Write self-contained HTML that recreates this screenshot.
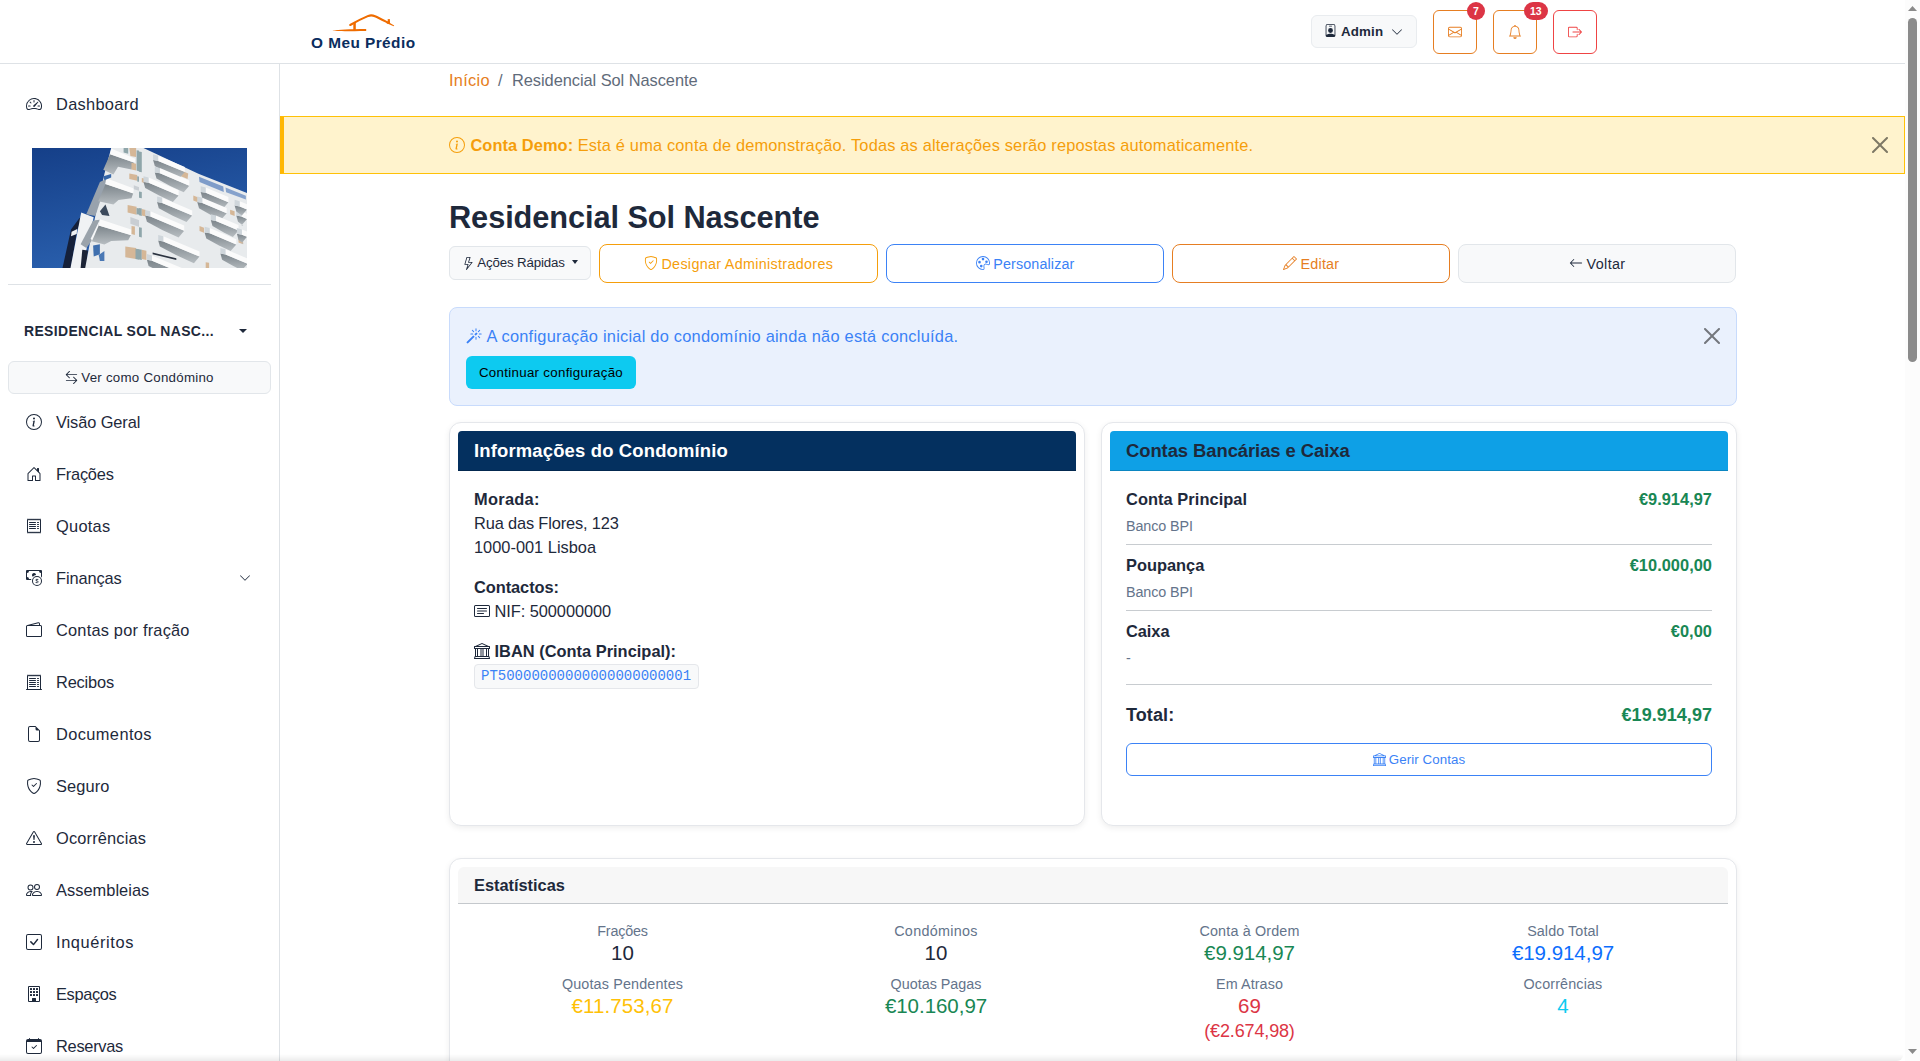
<!DOCTYPE html>
<html lang="pt"><head>
<meta charset="utf-8">
<title>Residencial Sol Nascente - O Meu Prédio</title>
<style>
*{box-sizing:border-box;margin:0;padding:0}
html,body{width:1920px;height:1061px;overflow:hidden;background:#fff}
body{font-family:"Liberation Sans",sans-serif;font-size:16px;color:#1e293b;position:relative;line-height:24px}
svg{display:inline-block;fill:currentColor;vertical-align:-.125em;width:1em;height:1em}
.t{white-space:nowrap;display:inline-block}
b,strong{font-weight:700}
.a{position:absolute;white-space:nowrap}
/* top bar */
#top{position:absolute;left:0;top:0;width:1905px;height:64px;background:#fff;border-bottom:1px solid #dee2e6;z-index:5}
#logo{position:absolute;left:311px;top:12px;width:105px;height:40px}
#logotxt{position:absolute;left:311px;top:34px;font-weight:700;font-size:15px;color:#0a2d5e;line-height:18px;white-space:nowrap}
.tbtn{position:absolute;top:10px;width:44px;height:44px;border:1px solid #e67e22;border-radius:6px;background:#fff;color:#e67e22}
.tbtn svg{position:absolute;left:14px;top:14px;width:14px;height:14px}
.badge{position:absolute;top:-9px;height:18px;min-width:18px;border-radius:9px;background:#dc3545;color:#fff;font-size:10.5px;font-weight:700;line-height:18px;text-align:center;padding:0 6px}
#admin{position:absolute;left:1311px;top:15px;width:106px;height:33px;border:1px solid #e9ecef;border-radius:6px;background:#f8f9fa;color:#1e293b;font-size:13px;font-weight:700;line-height:31px}
/* sidebar */
#side{position:absolute;left:0;top:64px;width:280px;height:997px;background:#fff;border-right:1px solid #dee2e6}
.nav{position:absolute;left:0;width:279px;height:24px;line-height:24px;font-size:16px;color:#1e293b}
.nav svg{position:absolute;left:26px;top:4px;width:16px;height:16px}
.nav .t{position:absolute;left:56px;top:0}
#bimg{position:absolute;left:32px;top:84px;width:215px;height:120px}
#shr{position:absolute;left:8px;top:220px;width:263px;height:1px;background:#dee2e6}
#cname{position:absolute;left:24px;top:256px;height:22px;line-height:22px;font-size:13.6px;font-weight:700;letter-spacing:.87px;color:#1e293b}
#cname .caret{position:absolute;left:215px;top:9px;width:0;height:0;border-left:4px solid transparent;border-right:4px solid transparent;border-top:4px solid #1e293b}
#vercomo{position:absolute;left:8px;top:297px;width:263px;height:33px;border:1px solid #e2e6ea;border-radius:6px;background:#f8f9fa;text-align:center;font-size:13px;line-height:31px;color:#1e293b}
/* main */
.card{position:absolute;background:#fff;border:1px solid #e5e7eb;border-radius:12px;box-shadow:0 2px 6px rgba(0,0,0,.07)}
.btn{position:absolute;border:1px solid;border-radius:8px;text-align:center;font-size:14px;height:39px;line-height:38px;top:244px;width:278.2px;background:#fff;white-space:nowrap}
.btn svg{width:14px;height:14px;margin-right:3.7px;vertical-align:-1px}
.ch{position:absolute;left:8px;top:8px;height:40px;border-radius:4px 4px 0 0;border-bottom:1px solid rgba(0,0,0,.16);font-weight:700;font-size:18px;line-height:39.5px;padding-left:16px}
.muted{color:#64748b}
.hr{position:absolute;height:1px;background:#c8ccd0}
.sl{position:absolute;font-size:14px;line-height:20px;color:#64748b;text-align:center;width:300px;margin-left:-150px;white-space:nowrap}
.sv{position:absolute;font-size:20px;line-height:28px;text-align:center;width:300px;margin-left:-150px;white-space:nowrap}
.g{color:#198754}
/* scrollbar */
#sb{position:absolute;left:1905px;top:0;width:15px;height:1061px;background:#fcfcfc;z-index:10}
#sb i{position:absolute;left:3px;width:9px;background:#8b8b8b;border-radius:4.5px;top:18px;height:344px}
#sb .up,#sb .dn{position:absolute;left:3px;width:9px;height:5px;background:#8a8a8a}
#sb .up{top:6px;clip-path:polygon(50% 0,100% 100%,0 100%)}
#sb .dn{top:1049px;clip-path:polygon(0 0,100% 0,50% 100%)}
#botshadow{position:absolute;left:0;top:1054px;width:1903px;height:7px;border-radius:0 0 6px 0;background:linear-gradient(to bottom,rgba(0,0,0,0),rgba(0,0,0,.03) 45%,rgba(0,0,0,.08));z-index:9}
.t{font-size:1.025em}

</style>
</head>
<body>
<div id="top">
<svg id="logo" viewBox="0 0 105 40" style="fill:none">
<path d="M39.2 13 C44 10.2 50 7 57.3 3.9 C59.6 3.1 62 3.4 64 4.3 C68 6 72.5 8.4 77 10.7" stroke="#ef6c00" stroke-width="2.1" stroke-linecap="round" fill="none"></path>
<path d="M76 9.2 L83.2 13.4 L82.7 14.2 L75.6 11.3Z" fill="#ef6c00" stroke="none"></path>
<path d="M76.6 7.3 L78.8 7.0 L79.1 11.6 L76.9 10.6Z" fill="#ef6c00" stroke="none"></path>
<path d="M42.3 11.6 L44.8 10.6 L44.8 18 L42.3 18Z" fill="#ef6c00" stroke="none"></path>
<path d="M21.8 18.6 C28 17.5 38 17.1 55.2 17 L55.2 19.1 C40 19.3 28 19.1 21.8 18.7Z" fill="#ef6c00" stroke="none"></path>
</svg>
<div id="logotxt"><span class="t" style="letter-spacing: 0.458px;">O Meu Prédio</span></div>
<div id="admin"><svg viewBox="0 0 16 16" style="position:absolute;left:12px;top:8px;width:13px;height:13px"><path d="M6.500 2a.5.5 0 0 0 0 1h3a.5.5 0 0 0 0-1h-3zM11 8a3 3 0 1 1-6 0 3 3 0 0 1 6 0z"></path><path d="M4.500 0A2.500 2.500 0 0 0 2 2.500V14a2 2 0 0 0 2 2h8a2 2 0 0 0 2-2V2.500A2.500 2.500 0 0 0 11.500 0h-7zM3 2.500A1.500 1.500 0 0 1 4.500 1h7A1.500 1.500 0 0 1 13 2.500v10.795a4.200 4.200 0 0 0-.776-.492C11.392 12.387 10.063 12 8 12s-3.392.387-4.224.803a4.200 4.200 0 0 0-.776.492V2.500z"></path></svg><span class="t" style="position: absolute; left: 29px; top: 0px; letter-spacing: 0.163px;">Admin</span><svg viewBox="0 0 16 16" style="position:absolute;left:79px;top:10px;width:12px;height:12px"><path fill-rule="evenodd" d="M1.646 4.646a.5.5 0 0 1 .708 0L8 10.293l5.646-5.647a.5.5 0 0 1 .708.708l-6 6a.5.5 0 0 1-.708 0l-6-6a.5.5 0 0 1 0-.708z"></path></svg></div>
<div class="tbtn" style="left:1433px"><svg viewBox="0 0 16 16"><path d="M0 4a2 2 0 0 1 2-2h12a2 2 0 0 1 2 2v8a2 2 0 0 1-2 2H2a2 2 0 0 1-2-2V4Zm2-1a1 1 0 0 0-1 1v.217l7 4.200 7-4.200V4a1 1 0 0 0-1-1H2Zm13 2.383-4.708 2.825L15 11.105V5.383Zm-.034 6.876-5.640-3.471L8 9.583l-1.326-.795-5.640 3.470A1 1 0 0 0 2 13h12a1 1 0 0 0 .966-.741ZM1 11.105l4.708-2.897L1 5.383v5.722Z"></path></svg><span class="badge" style="left:33px">7</span></div>
<div class="tbtn" style="left:1493px"><svg viewBox="0 0 16 16"><path d="M8 16a2 2 0 0 0 2-2H6a2 2 0 0 0 2 2zM8 1.918l-.797.161A4.002 4.002 0 0 0 4 6c0 .628-.134 2.197-.459 3.742-.160.767-.376 1.566-.663 2.258h10.244c-.287-.692-.502-1.490-.663-2.258C12.134 8.197 12 6.628 12 6a4.002 4.002 0 0 0-3.203-3.920L8 1.917zM14.220 12c.223.447.481.801.780 1H1c.299-.199.557-.553.780-1C2.680 10.200 3 6.880 3 6c0-2.420 1.720-4.440 4.005-4.901a1 1 0 1 1 1.990 0A5.002 5.002 0 0 1 13 6c0 .880.320 4.200 1.220 6z"></path></svg><span class="badge" style="left:30px">13</span></div>
<div class="tbtn" style="left:1553px;border-color:#ef4444;color:#ef4444"><svg viewBox="0 0 16 16"><path fill-rule="evenodd" d="M10 12.500a.5.5 0 0 1-.5.5h-8a.5.5 0 0 1-.5-.5v-9a.5.5 0 0 1 .5-.5h8a.5.5 0 0 1 .5.5v2a.5.5 0 0 0 1 0v-2A1.500 1.500 0 0 0 9.500 2h-8A1.500 1.500 0 0 0 0 3.500v9A1.500 1.500 0 0 0 1.500 14h8a1.500 1.500 0 0 0 1.500-1.500v-2a.5.5 0 0 0-1 0v2z"></path><path fill-rule="evenodd" d="M15.854 8.354a.5.5 0 0 0 0-.708l-3-3a.5.5 0 0 0-.708.708L14.293 7.500H5.500a.5.5 0 0 0 0 1h8.793l-2.147 2.146a.5.5 0 0 0 .708.708l3-3z"></path></svg></div>
</div>
<div id="side">
<div class="nav" style="top:28px"><svg viewBox="0 0 16 16"><path d="M8 4a.5.5 0 0 1 .5.5V6a.5.5 0 0 1-1 0V4.500A.5.5 0 0 1 8 4zM3.732 5.732a.5.5 0 0 1 .707 0l.915.914a.5.5 0 1 1-.708.708l-.914-.915a.5.5 0 0 1 0-.707zM2 10a.5.5 0 0 1 .5-.5h1.586a.5.5 0 0 1 0 1H2.500A.5.5 0 0 1 2 10zm9.500 0a.5.5 0 0 1 .5-.5h1.500a.5.5 0 0 1 0 1H12a.5.5 0 0 1-.5-.5zm.754-4.246a.389.389 0 0 0-.527-.020L7.547 9.310a.910.910 0 1 0 1.302 1.258l3.434-4.297a.389.389 0 0 0-.029-.518z"></path><path fill-rule="evenodd" d="M0 10a8 8 0 1 1 15.547 2.661c-.442 1.253-1.845 1.602-2.932 1.250C11.309 13.488 9.475 13 8 13c-1.474 0-3.310.488-4.615.911-1.087.352-2.490.003-2.932-1.250A7.988 7.988 0 0 1 0 10zm8-7a7 7 0 0 0-6.603 9.329c.203.575.923.876 1.680.630C4.397 12.533 6.358 12 8 12s3.604.532 4.923.960c.757.245 1.477-.056 1.680-.631A7 7 0 0 0 8 3z"></path></svg><span class="t" style="letter-spacing: 0.295px;">Dashboard</span></div>
<svg id="bimg" viewBox="0 0 215 120" preserveAspectRatio="none"><defs><linearGradient id="sky" x1="0" y1="0" x2=".35" y2="1"><stop offset="0" stop-color="#153f88"></stop><stop offset="1" stop-color="#2a60ae"></stop></linearGradient><linearGradient id="ug" x1="0" y1="0" x2="0" y2="1"><stop offset="0" stop-color="#7b848a"></stop><stop offset="1" stop-color="#b7bdc1"></stop></linearGradient></defs><rect width="215" height="120" fill="url(#sky)"></rect><polygon points="30.5,120.0 39.0,81.4 47.5,70.1 49.8,72.4 45.2,81.4 39.0,120.0" fill="#15203a"></polygon><polygon points="38.5,120.0 49.2,64.5 61.7,69.2 50.3,120.0" fill="#f0f2f4"></polygon><polygon points="39.6,83.7 45.2,80.9 44.7,86.0 39.0,88.2" fill="#eef0f2"></polygon><polygon points="48.6,120.0 50.3,101.8 56.0,102.4 54.3,120.0" fill="#1c2436"></polygon><polygon points="79.2,0.0 108.0,0.0 108.0,120.0 53.2,120.0 56.6,101.8 63.3,67.9 72.4,26.0" fill="#e8ebed"></polygon><polygon points="54.3,66.2 67.9,33.9 74.1,31.1 73.5,37.3 63.3,67.9" fill="#98a2ad"></polygon><polygon points="48.6,96.2 61.1,72.4 67.9,71.8 66.7,79.2 58.8,93.9 54.3,100.1" fill="#9aa3ab"></polygon><polygon points="67.9,63.3 73.5,56.6 77.5,67.9 70.1,67.0" fill="#3c4a5c"></polygon><polygon points="78.1,6.2 102.4,14.7 99.5,21.5 86.0,18.7 81.4,26.6 71.3,21.7" fill="url(#ug)"></polygon><polygon points="73.5,36.0 101.2,45.2 99.5,50.3 86.5,52.0 81.4,56.6 66.2,53.2" fill="url(#ug)"></polygon><polygon points="66.7,77.5 99.0,87.1 96.2,92.2 79.2,93.0 72.4,96.4 58.8,93.0" fill="url(#ug)"></polygon><polygon points="79.2,0.6 103.2,10.7 102.7,14.7 78.1,6.2" fill="#fbfbfb"></polygon><polygon points="74.4,30.3 101.8,40.5 101.2,45.5 73.3,36.0" fill="#fbfbfb"></polygon><polygon points="67.9,71.3 99.8,81.7 99.1,87.3 66.5,77.6" fill="#fbfbfb"></polygon><polygon points="58.8,90.5 67.9,71.5 66.5,78.1 60.0,93.0" fill="#f6f7f8"></polygon><polygon points="61.1,97.5 67.9,96.2 67.9,106.3 61.7,108.6" fill="#3f6fae"></polygon><polygon points="66.7,106.9 72.4,102.9 72.4,113.1 67.9,113.1" fill="#4a78b4"></polygon><polygon points="71.3,28.3 79.2,26.0 79.2,29.6 72.4,32.2" fill="#3566a8"></polygon><polygon points="97.3,0.0 104.1,0.0 104.1,9.0 98.4,7.9" fill="#d5b797"></polygon><polygon points="99.5,14.7 104.1,15.8 104.1,22.6 99.5,21.5" fill="#d5b797"></polygon><polygon points="97.3,25.5 105.2,27.1 105.2,32.8 97.3,31.1" fill="#d5b797"></polygon><polygon points="95.6,57.1 104.6,58.8 104.6,66.7 95.6,64.5" fill="#d5b797"></polygon><polygon points="99.5,78.1 102.9,78.6 102.9,87.1 99.5,86.0" fill="#d5b797"></polygon><polygon points="93.3,98.4 104.1,100.1 104.1,110.9 93.3,109.2" fill="#d5b797"></polygon><polygon points="91.6,0.0 96.2,0.0 96.2,5.7 91.6,4.5" fill="#8fa6aa"></polygon><polygon points="104.6,2.3 108.0,2.8 108.0,23.8 104.6,22.6" fill="#8fa6aa"></polygon><polygon points="105.2,28.3 108.0,28.8 108.0,33.9 105.2,33.4" fill="#8fa6aa"></polygon><polygon points="104.6,60.0 108.0,60.5 108.0,66.7 104.6,66.2" fill="#8fa6aa"></polygon><polygon points="103.5,100.7 108.0,101.2 108.0,112.0 103.5,110.9" fill="#8fa6aa"></polygon><polygon points="98.4,69.0 108.0,72.4 108.0,79.2 98.4,75.8" fill="#c9ced3"></polygon><polygon points="101.8,37.3 108.0,39.6 108.0,43.0 101.8,41.3" fill="#c9ced3"></polygon><polygon points="107.0,0.0 111.5,0.0 166.4,25.8 215.0,45.0 215.0,120.0 107.0,120.0" fill="#e8ebed"></polygon><polygon points="167.0,28.8 191.3,38.5 191.8,43.9 167.5,33.9" fill="#7e9cc9"></polygon><polygon points="193.5,39.6 213.9,47.7 213.9,51.5 194.1,44.3" fill="#86a2cc"></polygon><polygon points="107.0,3.4 109.8,4.0 109.8,24.3 107.0,23.8" fill="#8fa6aa"></polygon><polygon points="107.0,43.6 109.8,44.1 109.8,50.3 107.0,49.8" fill="#8fa6aa"></polygon><polygon points="107.0,60.0 109.8,60.5 109.8,67.9 107.0,67.3" fill="#8fa6aa"></polygon><polygon points="107.0,79.2 109.8,79.8 109.8,89.4 107.0,88.8" fill="#8fa6aa"></polygon><polygon points="107.0,101.2 109.8,101.8 109.8,112.0 107.0,111.4" fill="#8fa6aa"></polygon><polygon points="109.8,30.0 113.8,30.8 113.8,35.1 109.8,34.3" fill="#d5b797"></polygon><polygon points="109.8,61.1 113.8,62.0 113.8,68.4 109.8,67.5" fill="#d5b797"></polygon><polygon points="109.8,101.8 114.4,102.7 114.4,112.0 109.8,111.1" fill="#d5b797"></polygon><polygon points="148.3,22.1 156.2,25.5 155.6,31.1 147.7,27.7" fill="#d5b797"></polygon><polygon points="161.3,47.5 165.8,49.2 165.8,54.3 161.3,52.6" fill="#d5b797"></polygon><polygon points="167.5,78.1 172.0,79.8 172.0,84.8 167.5,83.1" fill="#d5b797"></polygon><polygon points="198.1,61.7 202.6,63.3 202.6,67.9 198.1,66.2" fill="#d5b797"></polygon><polygon points="206.5,88.8 211.1,90.5 211.1,96.2 206.5,94.5" fill="#d5b797"></polygon><polygon points="173.7,114.3 177.1,114.8 177.1,120.0 173.7,120.0" fill="#d5b797"></polygon><polygon points="121.1,12.0 126.2,12.9 152.8,24.1 147.2,30.6 135.5,25.2 122.8,18.1" fill="url(#ug)"></polygon><polygon points="126.2,7.7 152.8,18.9 152.8,24.1 126.2,12.9" fill="#fbfbfb"></polygon><polygon points="121.1,6.3 126.2,7.7 126.2,12.9 121.1,12.0" fill="#cfd6db"></polygon><polygon points="122.8,24.4 127.9,25.3 157.3,37.7 151.7,44.3 138.2,38.0 124.5,30.5" fill="url(#ug)"></polygon><polygon points="127.9,20.1 157.3,32.5 157.3,37.7 127.9,25.3" fill="#fbfbfb"></polygon><polygon points="122.8,18.8 127.9,20.1 127.9,25.3 122.8,24.4" fill="#cfd6db"></polygon><polygon points="111.5,33.9 116.6,34.8 146.6,47.4 140.9,54.0 127.1,47.6 113.2,40.0" fill="url(#ug)"></polygon><polygon points="116.6,29.6 146.6,42.2 146.6,47.4 116.6,34.8" fill="#fbfbfb"></polygon><polygon points="111.5,28.3 116.6,29.6 116.6,34.8 111.5,33.9" fill="#cfd6db"></polygon><polygon points="125.1,54.1 130.2,55.0 160.2,67.6 154.5,74.1 140.7,67.8 126.8,60.2" fill="url(#ug)"></polygon><polygon points="130.2,49.8 160.2,62.4 160.2,67.6 130.2,55.0" fill="#fbfbfb"></polygon><polygon points="125.1,48.4 130.2,49.8 130.2,55.0 125.1,54.1" fill="#cfd6db"></polygon><polygon points="113.2,67.6 118.3,68.6 152.2,82.8 146.6,89.4 130.2,81.9 114.9,73.8" fill="url(#ug)"></polygon><polygon points="118.3,63.3 152.2,77.6 152.2,82.8 118.3,68.6" fill="#fbfbfb"></polygon><polygon points="113.2,62.0 118.3,63.3 118.3,68.6 113.2,67.6" fill="#cfd6db"></polygon><polygon points="126.2,92.5 131.3,93.4 167.5,108.6 161.9,115.2 144.0,107.1 127.9,98.6" fill="url(#ug)"></polygon><polygon points="131.3,88.2 167.5,103.4 167.5,108.6 131.3,93.4" fill="#fbfbfb"></polygon><polygon points="126.2,86.9 131.3,88.2 131.3,93.4 126.2,92.5" fill="#cfd6db"></polygon><polygon points="114.9,111.8 120.0,112.7 159.6,129.3 153.9,135.9 133.9,126.9 116.6,117.9" fill="url(#ug)"></polygon><polygon points="120.0,107.5 159.6,124.1 159.6,129.3 120.0,112.7" fill="#fbfbfb"></polygon><polygon points="114.9,106.1 120.0,107.5 120.0,112.7 114.9,111.8" fill="#cfd6db"></polygon><polygon points="168.7,43.9 173.7,44.8 196.4,54.3 190.7,60.9 181.7,56.5 170.3,50.0" fill="url(#ug)"></polygon><polygon points="173.7,39.6 196.4,49.1 196.4,54.3 173.7,44.8" fill="#fbfbfb"></polygon><polygon points="168.7,38.2 173.7,39.6 173.7,44.8 168.7,43.9" fill="#cfd6db"></polygon><polygon points="165.3,54.1 170.3,55.0 194.7,65.2 189.0,71.8 178.9,66.9 167.0,60.2" fill="url(#ug)"></polygon><polygon points="170.3,49.8 194.7,60.0 194.7,65.2 170.3,55.0" fill="#fbfbfb"></polygon><polygon points="165.3,48.4 170.3,49.8 170.3,55.0 165.3,54.1" fill="#cfd6db"></polygon><polygon points="178.8,71.9 183.9,72.9 206.5,82.4 200.9,88.9 191.8,84.5 180.5,78.1" fill="url(#ug)"></polygon><polygon points="183.9,67.6 206.5,77.1 206.5,82.4 183.9,72.9" fill="#fbfbfb"></polygon><polygon points="178.8,66.3 183.9,67.6 183.9,72.9 178.8,71.9" fill="#cfd6db"></polygon><polygon points="172.6,84.4 177.7,85.3 204.3,96.5 198.6,103.0 187.0,97.6 174.3,90.5" fill="url(#ug)"></polygon><polygon points="177.7,80.1 204.3,91.3 204.3,96.5 177.7,85.3" fill="#fbfbfb"></polygon><polygon points="172.6,78.7 177.7,80.1 177.7,85.3 172.6,84.4" fill="#cfd6db"></polygon><polygon points="188.4,105.5 193.5,106.4 215.6,115.7 209.9,122.3 201.3,118.1 190.1,111.7" fill="url(#ug)"></polygon><polygon points="193.5,101.2 215.6,110.5 215.6,115.7 193.5,106.4" fill="#fbfbfb"></polygon><polygon points="188.4,99.9 193.5,101.2 193.5,106.4 188.4,105.5" fill="#cfd6db"></polygon><polygon points="204.3,67.6 209.4,68.6 215.0,70.9 209.4,77.5 211.4,77.8 206.0,73.8" fill="url(#ug)"></polygon><polygon points="209.4,63.3 215.0,65.7 215.0,70.9 209.4,68.6" fill="#fbfbfb"></polygon><polygon points="204.3,62.0 209.4,63.3 209.4,68.6 204.3,67.6" fill="#cfd6db"></polygon><polygon points="202.6,57.5 207.7,58.4 215.0,61.5 209.4,68.0 210.3,67.8 204.3,63.6" fill="url(#ug)"></polygon><polygon points="207.7,53.2 215.0,56.3 215.0,61.5 207.7,58.4" fill="#fbfbfb"></polygon><polygon points="202.6,51.8 207.7,53.2 207.7,58.4 202.6,57.5" fill="#cfd6db"></polygon><polygon points="204.9,85.7 209.9,86.7 215.0,88.8 209.4,95.4 211.7,95.8 206.5,91.9" fill="url(#ug)"></polygon><polygon points="209.9,81.4 215.0,83.6 215.0,88.8 209.9,86.7" fill="#fbfbfb"></polygon><polygon points="204.9,80.1 209.9,81.4 209.9,86.7 204.9,85.7" fill="#cfd6db"></polygon><polygon points="120.6,104.6 144.3,110.3 144.3,112.0 120.6,106.3" fill="#2b3340"></polygon></svg>
<div id="shr"></div>
<div id="cname"><span class="t" style="letter-spacing: 0.37px;">RESIDENCIAL SOL NASC...</span><i class="caret"></i></div>
<div id="vercomo"><svg viewBox="0 0 16 16" style="width:13px;height:13px;margin-right:3px"><path fill-rule="evenodd" d="M1 11.500a.5.5 0 0 0 .5.5h11.793l-3.147 3.146a.5.5 0 0 0 .708.708l4-4a.5.5 0 0 0 0-.708l-4-4a.5.5 0 0 0-.708.708L13.293 11H1.500a.5.5 0 0 0-.5.5zm14-7a.5.5 0 0 1-.5.5H2.707l3.147 3.146a.5.5 0 1 1-.708.708l-4-4a.5.5 0 0 1 0-.708l4-4a.5.5 0 1 1 .708.708L2.707 4H14.500a.5.5 0 0 1 .5.5z"></path></svg><span class="t" style="letter-spacing: 0.25px;">Ver como Condómino</span></div>
<div class="nav" style="top:346px"><svg viewBox="0 0 16 16"><path d="M8 15A7 7 0 1 1 8 1a7 7 0 0 1 0 14zm0 1A8 8 0 1 0 8 0a8 8 0 0 0 0 16z"></path><path d="m8.930 6.588-2.290.287-.082.380.450.083c.294.070.352.176.288.469l-.738 3.468c-.194.897.105 1.319.808 1.319.545 0 1.178-.252 1.465-.598l.088-.416c-.200.176-.492.246-.686.246-.275 0-.375-.193-.304-.533L8.930 6.588zM9 4.500a1 1 0 1 1-2 0 1 1 0 0 1 2 0z"></path></svg><span class="t" style="letter-spacing: -0.097px;">Visão Geral</span></div>
<div class="nav" style="top:398px"><svg viewBox="0 0 16 16"><path d="M8.354 1.146a.5.5 0 0 0-.708 0l-6 6A.5.5 0 0 0 1.500 7.500v7a.5.5 0 0 0 .5.5h4.500a.5.5 0 0 0 .5-.5v-4h2v4a.5.5 0 0 0 .5.5H14a.5.5 0 0 0 .5-.5v-7a.5.5 0 0 0-.146-.354L13 5.793V2.500a.5.5 0 0 0-.5-.5h-1a.5.5 0 0 0-.5.5v1.293L8.354 1.146zM2.500 14V7.707l5.500-5.500 5.500 5.500V14H10v-4a.5.5 0 0 0-.5-.5h-3a.5.5 0 0 0-.5.5v4H2.500z"></path></svg><span class="t" style="letter-spacing: -0.228px;">Frações</span></div>
<div class="nav" style="top:450px"><svg viewBox="0 0 16 16"><path d="M1.920.506a.5.5 0 0 1 .434.140L3 1.293l.646-.647a.5.5 0 0 1 .708 0L5 1.293l.646-.647a.5.5 0 0 1 .708 0L7 1.293l.646-.647a.5.5 0 0 1 .708 0L9 1.293l.646-.647a.5.5 0 0 1 .708 0l.646.647.646-.647a.5.5 0 0 1 .708 0l.646.647.646-.647a.5.5 0 0 1 .801.130l.5 1A.5.5 0 0 1 15 2v12a.5.5 0 0 1-.053.224l-.5 1a.5.5 0 0 1-.800.130L13 14.707l-.646.647a.5.5 0 0 1-.708 0L11 14.707l-.646.647a.5.5 0 0 1-.708 0L9 14.707l-.646.647a.5.5 0 0 1-.708 0L7 14.707l-.646.647a.5.5 0 0 1-.708 0L5 14.707l-.646.647a.5.5 0 0 1-.708 0L3 14.707l-.646.647a.5.5 0 0 1-.801-.130l-.5-1A.5.5 0 0 1 1 14V2a.5.5 0 0 1 .053-.224l.5-1a.5.5 0 0 1 .367-.270zm.217 1.338L2 2.118v11.764l.137.274.510-.510a.5.5 0 0 1 .707 0l.646.647.646-.646a.5.5 0 0 1 .708 0l.646.646.646-.646a.5.5 0 0 1 .708 0l.646.646.646-.646a.5.5 0 0 1 .708 0l.646.646.646-.646a.5.5 0 0 1 .708 0l.646.646.646-.646a.5.5 0 0 1 .708 0l.509.509.137-.274V2.118l-.137-.274-.510.510a.5.5 0 0 1-.707 0L12 1.707l-.646.647a.5.5 0 0 1-.708 0L10 1.707l-.646.647a.5.5 0 0 1-.708 0L8 1.707l-.646.647a.5.5 0 0 1-.708 0L6 1.707l-.646.647a.5.5 0 0 1-.708 0L4 1.707l-.646.647a.5.5 0 0 1-.708 0l-.509-.510z"></path><path d="M3 4.500a.5.5 0 0 1 .5-.5h6a.5.5 0 1 1 0 1h-6a.5.5 0 0 1-.5-.5zm0 2a.5.5 0 0 1 .5-.5h6a.5.5 0 1 1 0 1h-6a.5.5 0 0 1-.5-.5zm0 2a.5.5 0 0 1 .5-.5h6a.5.5 0 1 1 0 1h-6a.5.5 0 0 1-.5-.5zm0 2a.5.5 0 0 1 .5-.5h6a.5.5 0 0 1 0 1h-6a.5.5 0 0 1-.5-.5zm8-6a.5.5 0 0 1 .5-.5h1a.5.5 0 0 1 0 1h-1a.5.5 0 0 1-.5-.5zm0 2a.5.5 0 0 1 .5-.5h1a.5.5 0 0 1 0 1h-1a.5.5 0 0 1-.5-.5zm0 2a.5.5 0 0 1 .5-.5h1a.5.5 0 0 1 0 1h-1a.5.5 0 0 1-.5-.5zm0 2a.5.5 0 0 1 .5-.5h1a.5.5 0 0 1 0 1h-1a.5.5 0 0 1-.5-.5z"></path></svg><span class="t" style="letter-spacing: 0.271px;">Quotas</span></div>
<div class="nav" style="top:502px"><svg viewBox="0 0 16 16"><path fill-rule="evenodd" d="M11 15a4 4 0 1 0 0-8 4 4 0 0 0 0 8zm5-4a5 5 0 1 1-10 0 5 5 0 0 1 10 0z"></path><path d="M9.438 11.944c.047.596.518 1.060 1.363 1.116v.440h.375v-.443c.875-.061 1.386-.529 1.386-1.207 0-.618-.390-.936-1.090-1.100l-.296-.070v-1.200c.376.043.614.248.671.532h.658c-.047-.575-.540-1.024-1.329-1.073V8.500h-.375v.450c-.747.073-1.255.522-1.255 1.158 0 .562.378.920 1.007 1.066l.248.061v1.272c-.384-.058-.639-.270-.696-.563h-.668zm1.360-1.354c-.369-.085-.569-.260-.569-.522 0-.294.216-.514.572-.578v1.100h-.003zm.432.746c.449.104.655.272.655.569 0 .339-.257.571-.709.614v-1.195l.054.012z"></path><path d="M1 0a1 1 0 0 0-1 1v8a1 1 0 0 0 1 1h4.083c.058-.344.145-.678.258-1H3a2 2 0 0 0-2-2V3a2 2 0 0 0 2-2h10a2 2 0 0 0 2 2v3.528c.380.340.717.728 1 1.154V1a1 1 0 0 0-1-1H1z"></path><path d="M9.998 5.083 10 5a2 2 0 1 0-3.132 1.650 5.982 5.982 0 0 1 3.130-1.567z"></path></svg><span class="t" style="letter-spacing: -0.125px;">Finanças</span><svg viewBox="0 0 16 16" style="left:239px;top:6px;width:12px;height:12px"><path fill-rule="evenodd" d="M1.646 4.646a.5.5 0 0 1 .708 0L8 10.293l5.646-5.647a.5.5 0 0 1 .708.708l-6 6a.5.5 0 0 1-.708 0l-6-6a.5.5 0 0 1 0-.708z"></path></svg></div>
<div class="nav" style="top:554px"><svg viewBox="0 0 16 16"><path d="M12.136.326A1.500 1.500 0 0 1 14 1.780V3h.5A1.500 1.500 0 0 1 16 4.500v9a1.500 1.500 0 0 1-1.500 1.500h-13A1.500 1.500 0 0 1 0 13.500v-9a1.500 1.500 0 0 1 1.432-1.499L12.136.326zM5.562 3H13V1.780a.5.5 0 0 0-.621-.484L5.562 3zM1.500 4a.5.5 0 0 0-.5.5v9a.5.5 0 0 0 .5.5h13a.5.5 0 0 0 .5-.5v-9a.5.5 0 0 0-.5-.5h-13z"></path></svg><span class="t" style="letter-spacing: 0.198px;">Contas por fração</span></div>
<div class="nav" style="top:606px"><svg viewBox="0 0 16 16"><path d="M3 4.500a.5.5 0 0 1 .5-.5h6a.5.5 0 1 1 0 1h-6a.5.5 0 0 1-.5-.5zm0 2a.5.5 0 0 1 .5-.5h6a.5.5 0 1 1 0 1h-6a.5.5 0 0 1-.5-.5zm0 2a.5.5 0 0 1 .5-.5h6a.5.5 0 1 1 0 1h-6a.5.5 0 0 1-.5-.5zm0 2a.5.5 0 0 1 .5-.5h6a.5.5 0 0 1 0 1h-6a.5.5 0 0 1-.5-.5zm0 2a.5.5 0 0 1 .5-.5h6a.5.5 0 0 1 0 1h-6a.5.5 0 0 1-.5-.5zM11.500 4a.5.5 0 0 0 0 1h1a.5.5 0 0 0 0-1h-1zm0 2a.5.5 0 0 0 0 1h1a.5.5 0 0 0 0-1h-1zm0 2a.5.5 0 0 0 0 1h1a.5.5 0 0 0 0-1h-1zm0 2a.5.5 0 0 0 0 1h1a.5.5 0 0 0 0-1h-1zm0 2a.5.5 0 0 0 0 1h1a.5.5 0 0 0 0-1h-1z"></path><path d="M2.354.646a.5.5 0 0 0-.801.130l-.5 1A.5.5 0 0 0 1 2v13H.5a.5.5 0 0 0 0 1h15a.5.5 0 0 0 0-1H15V2a.5.5 0 0 0-.053-.224l-.5-1a.5.5 0 0 0-.800-.130L13 1.293l-.646-.647a.5.5 0 0 0-.708 0L11 1.293l-.646-.647a.5.5 0 0 0-.708 0L9 1.293 8.354.646a.5.5 0 0 0-.708 0L7 1.293 6.354.646a.5.5 0 0 0-.708 0L5 1.293 4.354.646a.5.5 0 0 0-.708 0L3 1.293 2.354.646zm-.217 1.198.510.510a.5.5 0 0 0 .707 0L4 1.707l.646.647a.5.5 0 0 0 .708 0L6 1.707l.646.647a.5.5 0 0 0 .708 0L8 1.707l.646.647a.5.5 0 0 0 .708 0L10 1.707l.646.647a.5.5 0 0 0 .708 0L12 1.707l.646.647a.5.5 0 0 0 .708 0l.509-.510.137.274V15H2V2.118l.137-.274z"></path></svg><span class="t" style="letter-spacing: -0.179px;">Recibos</span></div>
<div class="nav" style="top:658px"><svg viewBox="0 0 16 16"><path d="M14 4.500V14a2 2 0 0 1-2 2H4a2 2 0 0 1-2-2V2a2 2 0 0 1 2-2h5.500L14 4.500zm-3 0A1.500 1.500 0 0 1 9.500 3V1H4a1 1 0 0 0-1 1v12a1 1 0 0 0 1 1h8a1 1 0 0 0 1-1V4.500h-2z"></path></svg><span class="t" style="letter-spacing: 0.391px;">Documentos</span></div>
<div class="nav" style="top:710px"><svg viewBox="0 0 16 16"><path d="M5.338 1.590a61.440 61.440 0 0 0-2.837.856.481.481 0 0 0-.328.390c-.554 4.157.726 7.190 2.253 9.188a10.725 10.725 0 0 0 2.287 2.233c.346.244.652.420.893.533.120.057.218.095.293.118a.550.550 0 0 0 .101.025.615.615 0 0 0 .100-.025c.076-.023.174-.061.294-.118.240-.113.547-.290.893-.533a10.726 10.726 0 0 0 2.287-2.233c1.527-1.997 2.807-5.031 2.253-9.188a.480.480 0 0 0-.328-.390c-.651-.213-1.750-.560-2.837-.855C9.552 1.290 8.531 1.067 8 1.067c-.530 0-1.552.223-2.662.524zM5.072.560C6.157.265 7.310 0 8 0s1.843.265 2.928.560c1.110.300 2.229.655 2.887.870a1.540 1.540 0 0 1 1.044 1.262c.596 4.477-.787 7.795-2.465 9.990a11.775 11.775 0 0 1-2.517 2.453 7.159 7.159 0 0 1-1.048.625c-.280.132-.581.240-.829.240s-.548-.108-.829-.240a7.158 7.158 0 0 1-1.048-.625 11.777 11.777 0 0 1-2.517-2.453C1.928 10.487.545 7.169 1.141 2.692A1.540 1.540 0 0 1 2.185 1.430 62.456 62.456 0 0 1 5.072.560z"></path><path d="M10.854 5.146a.5.5 0 0 1 0 .708l-3 3a.5.5 0 0 1-.708 0l-1.500-1.500a.5.5 0 1 1 .708-.708L7.500 7.793l2.646-2.647a.5.5 0 0 1 .708 0z"></path></svg><span class="t" style="letter-spacing: 0.109px;">Seguro</span></div>
<div class="nav" style="top:762px"><svg viewBox="0 0 16 16"><path d="M7.938 2.016A.130.130 0 0 1 8.002 2a.130.130 0 0 1 .063.016.146.146 0 0 1 .054.057l6.857 11.667c.036.060.035.124.002.183a.163.163 0 0 1-.054.060.116.116 0 0 1-.066.017H1.146a.115.115 0 0 1-.066-.017.163.163 0 0 1-.054-.060.176.176 0 0 1 .002-.183L7.884 2.073a.147.147 0 0 1 .054-.057zm1.044-.450a1.130 1.130 0 0 0-1.960 0L.165 13.233c-.457.778.091 1.767.980 1.767h13.713c.889 0 1.438-.990.980-1.767L8.982 1.566z"></path><path d="M7.002 12a1 1 0 1 1 2 0 1 1 0 0 1-2 0zM7.100 5.995a.905.905 0 1 1 1.800 0l-.350 3.507a.552.552 0 0 1-1.100 0L7.100 5.995z"></path></svg><span class="t" style="letter-spacing: 0.161px;">Ocorrências</span></div>
<div class="nav" style="top:814px"><svg viewBox="0 0 16 16"><path d="M15 14s1 0 1-1-1-4-5-4-5 3-5 4 1 1 1 1h8Zm-7.978-1A.261.261 0 0 1 7 12.996c.001-.264.167-1.030.760-1.720C8.312 10.629 9.282 10 11 10c1.717 0 2.687.630 3.240 1.276.593.690.758 1.457.760 1.720l-.008.002a.274.274 0 0 1-.014.002H7.022ZM11 7a2 2 0 1 0 0-4 2 2 0 0 0 0 4Zm3-2a3 3 0 1 1-6 0 3 3 0 0 1 6 0ZM6.936 9.280a5.880 5.880 0 0 0-1.230-.247A7.350 7.350 0 0 0 5 9c-4 0-5 3-5 4 0 .667.333 1 1 1h4.216A2.238 2.238 0 0 1 5 13c0-1.010.377-2.042 1.090-2.904.243-.294.526-.569.846-.816ZM4.920 10A5.493 5.493 0 0 0 4 13H1c0-.260.164-1.030.760-1.724.545-.636 1.492-1.256 3.160-1.275ZM1.500 5.500a3 3 0 1 1 6 0 3 3 0 0 1-6 0Zm3-2a2 2 0 1 0 0 4 2 2 0 0 0 0-4Z"></path></svg><span class="t" style="letter-spacing: 0.034px;">Assembleias</span></div>
<div class="nav" style="top:866px"><svg viewBox="0 0 16 16"><path d="M14 1a1 1 0 0 1 1 1v12a1 1 0 0 1-1 1H2a1 1 0 0 1-1-1V2a1 1 0 0 1 1-1h12zM2 0a2 2 0 0 0-2 2v12a2 2 0 0 0 2 2h12a2 2 0 0 0 2-2V2a2 2 0 0 0-2-2H2z"></path><path d="M10.970 4.970a.75.75 0 0 1 1.071 1.050l-3.992 4.990a.75.75 0 0 1-1.080.020L4.324 8.384a.75.75 0 1 1 1.060-1.060l2.094 2.093 3.473-4.425a.235.235 0 0 1 .020-.022z"></path></svg><span class="t" style="letter-spacing: 0.594px;">Inquéritos</span></div>
<div class="nav" style="top:918px"><svg viewBox="0 0 16 16"><path d="M4 2.500a.5.5 0 0 1 .5-.5h1a.5.5 0 0 1 .5.5v1a.5.5 0 0 1-.5.5h-1a.5.5 0 0 1-.5-.5v-1Zm3 0a.5.5 0 0 1 .5-.5h1a.5.5 0 0 1 .5.5v1a.5.5 0 0 1-.5.5h-1a.5.5 0 0 1-.5-.5v-1Zm3.500-.5a.5.5 0 0 0-.5.5v1a.5.5 0 0 0 .5.5h1a.5.5 0 0 0 .5-.5v-1a.5.5 0 0 0-.5-.5h-1ZM4 5.500a.5.5 0 0 1 .5-.5h1a.5.5 0 0 1 .5.5v1a.5.5 0 0 1-.5.5h-1a.5.5 0 0 1-.5-.5v-1ZM7.500 5a.5.5 0 0 0-.5.5v1a.5.5 0 0 0 .5.5h1a.5.5 0 0 0 .5-.5v-1a.5.5 0 0 0-.5-.5h-1Zm2.500.5a.5.5 0 0 1 .5-.5h1a.5.5 0 0 1 .5.5v1a.5.5 0 0 1-.5.5h-1a.5.5 0 0 1-.5-.5v-1ZM4.500 8a.5.5 0 0 0-.5.5v1a.5.5 0 0 0 .5.5h1a.5.5 0 0 0 .5-.5v-1a.5.5 0 0 0-.5-.5h-1Zm2.500.5a.5.5 0 0 1 .5-.5h1a.5.5 0 0 1 .5.5v1a.5.5 0 0 1-.5.5h-1a.5.5 0 0 1-.5-.5v-1Zm3.500-.5a.5.5 0 0 0-.5.5v1a.5.5 0 0 0 .5.5h1a.5.5 0 0 0 .5-.5v-1a.5.5 0 0 0-.5-.5h-1Z"></path><path d="M2 1a1 1 0 0 1 1-1h10a1 1 0 0 1 1 1v14a1 1 0 0 1-1 1H3a1 1 0 0 1-1-1V1Zm11 0H3v14h3v-2.500a.5.5 0 0 1 .5-.5h3a.5.5 0 0 1 .5.5V15h3V1Z"></path></svg><span class="t" style="letter-spacing: -0.353px;">Espaços</span></div>
<div class="nav" style="top:970px"><svg viewBox="0 0 16 16"><path d="M10.854 7.146a.5.5 0 0 1 0 .708l-3 3a.5.5 0 0 1-.708 0l-1.500-1.500a.5.5 0 1 1 .708-.708L7.500 9.793l2.646-2.647a.5.5 0 0 1 .708 0z"></path><path d="M3.500 0a.5.5 0 0 1 .5.5V1h8V.5a.5.5 0 0 1 1 0V1h1a2 2 0 0 1 2 2v11a2 2 0 0 1-2 2H2a2 2 0 0 1-2-2V3a2 2 0 0 1 2-2h1V.5a.5.5 0 0 1 .5-.5zM1 4v10a1 1 0 0 0 1 1h12a1 1 0 0 0 1-1V4H1z"></path></svg><span class="t" style="letter-spacing: -0.273px;">Reservas</span></div>
</div>
<div id="main">
<div class="a" style="left:449px;top:68px;color:#e67e22"><span class="t" style="letter-spacing: 0.292px;">Início</span></div>
<div class="a" style="left:498px;top:68px;color:#5f6b7a"><span class="t" style="letter-spacing: 1.391px;">/</span></div>
<div class="a" style="left:512px;top:68px;color:#5f6b7a"><span class="t" style="letter-spacing: -0.051px;">Residencial Sol Nascente</span></div>

<div class="a" style="left:280px;top:116px;width:1625px;height:58px;background:#fff3cd;border:1px solid #ffc107;border-left:4px solid #ffb703"></div>
<div class="a" style="left:449px;top:133px;color:#f59e0b"><svg viewBox="0 0 16 16" style="width:16px;height:16px;vertical-align:-2px"><path d="M8 15A7 7 0 1 1 8 1a7 7 0 0 1 0 14zm0 1A8 8 0 1 0 8 0a8 8 0 0 0 0 16z"></path><path d="m8.930 6.588-2.290.287-.082.380.450.083c.294.070.352.176.288.469l-.738 3.468c-.194.897.105 1.319.808 1.319.545 0 1.178-.252 1.465-.598l.088-.416c-.200.176-.492.246-.686.246-.275 0-.375-.193-.304-.533L8.930 6.588zM9 4.500a1 1 0 1 1-2 0 1 1 0 0 1 2 0z"></path></svg> <span class="t" style="margin-left: 1px; letter-spacing: 0.067px;"><b>Conta Demo:</b></span> <span class="t" style="letter-spacing: 0.17px;">Esta é uma conta de demonstração. Todas as alterações serão repostas automaticamente.</span></div>
<div class="a" style="left:1872px;top:137px;color:#000;opacity:.5"><svg viewBox="0 0 16 16" style="width:16px;height:16px;display:block"><path d="M.293.293a1 1 0 0 1 1.414 0L8 6.586 14.293.293a1 1 0 1 1 1.414 1.414L9.414 8l6.293 6.293a1 1 0 0 1-1.414 1.414L8 9.414l-6.293 6.293a1 1 0 0 1-1.414-1.414L6.586 8 .293 1.707a1 1 0 0 1 0-1.414z"></path></svg></div>

<h1 class="a" style="left:449px;top:199px;font-size:30px;line-height:36px;font-weight:700;color:#1e293b"><span class="t" style="letter-spacing: -0.09px; transform: translateY(1px);">Residencial Sol Nascente</span></h1>

<div class="a" style="left:449px;top:246px;width:142px;height:34px;border:1px solid #e2e6ea;border-radius:6px;background:#f8f9fa;font-size:13px;line-height:30.5px;text-align:center"><svg viewBox="0 0 16 16" style="width: 13px; height: 13px; vertical-align: -3px; margin-right: 2px; transform: translateY(1px);"><path d="M5.520.359A.5.5 0 0 1 6 0h4a.5.5 0 0 1 .474.658L8.694 6H12.500a.5.5 0 0 1 .395.807l-7 9a.5.5 0 0 1-.873-.454L6.823 9.500H3.500a.5.5 0 0 1-.480-.641l2.500-8.500zM6.374 1 4.168 8.500H7.500a.5.5 0 0 1 .478.647L6.780 13.040 11.478 7H8a.5.5 0 0 1-.474-.658L9.306 1H6.374z"></path></svg><span class="t" style="letter-spacing: -0.149px; transform: translateY(1px);">Ações Rápidas</span><i style="display:inline-block;margin-left:7px;vertical-align:2px;border-left:3.5px solid transparent;border-right:3.5px solid transparent;border-top:4px solid #1e293b"></i></div>
<div class="btn" style="left:599.4px;color:#f59e0b;border-color:#f59e0b"><svg viewBox="0 0 16 16"><path d="M5.338 1.590a61.440 61.440 0 0 0-2.837.856.481.481 0 0 0-.328.390c-.554 4.157.726 7.190 2.253 9.188a10.725 10.725 0 0 0 2.287 2.233c.346.244.652.420.893.533.120.057.218.095.293.118a.550.550 0 0 0 .101.025.615.615 0 0 0 .100-.025c.076-.023.174-.061.294-.118.240-.113.547-.290.893-.533a10.726 10.726 0 0 0 2.287-2.233c1.527-1.997 2.807-5.031 2.253-9.188a.480.480 0 0 0-.328-.390c-.651-.213-1.750-.560-2.837-.855C9.552 1.290 8.531 1.067 8 1.067c-.530 0-1.552.223-2.662.524zM5.072.560C6.157.265 7.310 0 8 0s1.843.265 2.928.560c1.110.300 2.229.655 2.887.870a1.540 1.540 0 0 1 1.044 1.262c.596 4.477-.787 7.795-2.465 9.990a11.775 11.775 0 0 1-2.517 2.453 7.159 7.159 0 0 1-1.048.625c-.280.132-.581.240-.829.240s-.548-.108-.829-.240a7.158 7.158 0 0 1-1.048-.625 11.777 11.777 0 0 1-2.517-2.453C1.928 10.487.545 7.169 1.141 2.692A1.540 1.540 0 0 1 2.185 1.430 62.456 62.456 0 0 1 5.072.560z"></path><path d="M10.854 5.146a.5.5 0 0 1 0 .708l-3 3a.5.5 0 0 1-.708 0l-1.500-1.500a.5.5 0 1 1 .708-.708L7.500 7.793l2.646-2.647a.5.5 0 0 1 .708 0z"></path></svg><span class="t" style="letter-spacing: 0.315px;">Designar Administradores</span></div>
<div class="btn" style="left:885.9px;color:#3b82f6;border-color:#3b82f6"><svg viewBox="0 0 16 16"><path d="M8 5a1.500 1.500 0 1 0 0-3 1.500 1.500 0 0 0 0 3zm4 3a1.500 1.500 0 1 0 0-3 1.500 1.500 0 0 0 0 3zM5.500 7a1.500 1.500 0 1 1-3 0 1.500 1.500 0 0 1 3 0zm.5 6a1.500 1.500 0 1 0 0-3 1.500 1.500 0 0 0 0 3z"></path><path d="M16 8c0 3.150-1.866 2.585-3.567 2.070C11.420 9.763 10.465 9.473 10 10c-.603.683-.475 1.819-.351 2.920C9.826 14.495 9.996 16 8 16a8 8 0 1 1 8-8zm-8 7c.611 0 .654-.171.655-.176.078-.146.124-.464.070-1.119-.014-.168-.037-.370-.061-.591-.052-.464-.112-1.005-.118-1.462-.010-.707.083-1.610.704-2.314.369-.417.845-.578 1.272-.618.404-.038.812.026 1.160.104.343.077.702.186 1.025.284l.028.008c.346.105.658.199.953.266.653.148.904.083.991.024C14.717 9.380 15 9.161 15 8a7 7 0 1 0-7 7z"></path></svg><span class="t" style="letter-spacing: 0.129px;">Personalizar</span></div>
<div class="btn" style="left:1172px;color:#e67e22;border-color:#e67e22"><svg viewBox="0 0 16 16"><path d="M12.146.146a.5.5 0 0 1 .708 0l3 3a.5.5 0 0 1 0 .708l-10 10a.5.5 0 0 1-.168.110l-5 2a.5.5 0 0 1-.650-.650l2-5a.5.5 0 0 1 .110-.168l10-10zM11.207 2.500 13.500 4.793 14.793 3.500 12.500 1.207 11.207 2.500zm1.586 3L10.500 3.207 4 9.707V10h.5a.5.5 0 0 1 .5.5v.5h.5a.5.5 0 0 1 .5.5v.5h.293l6.500-6.500zm-9.761 5.175-.106.106-1.528 3.821 3.821-1.528.106-.106A.5.5 0 0 1 5 12.500V12h-.5a.5.5 0 0 1-.5-.5V11h-.5a.5.5 0 0 1-.468-.325z"></path></svg><span class="t" style="letter-spacing: 0.203px;">Editar</span></div>
<div class="btn" style="left:1458.1px;color:#1e293b;border-color:#e2e6ea;background:#f8f9fa"><svg viewBox="0 0 16 16"><path fill-rule="evenodd" d="M15 8a.5.5 0 0 0-.5-.5H2.707l3.147-3.146a.5.5 0 1 0-.708-.708l-4 4a.5.5 0 0 0 0 .708l4 4a.5.5 0 0 0 .708-.708L2.707 8.500H14.500A.5.5 0 0 0 15 8z"></path></svg><span class="t" style="letter-spacing: 0.37px;">Voltar</span></div>

<div class="a" style="left:449px;top:307px;width:1288px;height:98.5px;background:#eaf1fd;border:1px solid #c8dbfc;border-radius:8px"></div>
<div class="a" style="left:466px;top:324px;color:#3b82f6"><svg viewBox="0 0 16 16" style="width:16px;height:16px;vertical-align:-2px"><path d="M9.500 2.672a.5.5 0 1 0 1 0V.843a.5.5 0 0 0-1 0v1.829Zm4.500.035A.5.5 0 0 0 13.293 2L12 3.293a.5.5 0 1 0 .707.707L14 2.707ZM7.293 4A.5.5 0 1 0 8 3.293L6.707 2A.5.5 0 0 0 6 2.707L7.293 4Zm-.621 2.500a.5.5 0 1 0 0-1H4.843a.5.5 0 1 0 0 1h1.829Zm8.485 0a.5.5 0 1 0 0-1h-1.829a.5.5 0 0 0 0 1h1.829ZM13.293 10A.5.5 0 1 0 14 9.293L12.707 8a.5.5 0 1 0-.707.707L13.293 10ZM9.500 11.157a.5.5 0 0 0 1 0V9.328a.5.5 0 0 0-1 0v1.829Zm1.854-5.097a.5.5 0 0 0 0-.706l-.708-.708a.5.5 0 0 0-.707 0L8.646 5.940a.5.5 0 0 0 0 .707l.708.708a.5.5 0 0 0 .707 0l1.293-1.293Zm-3 3a.5.5 0 0 0 0-.706l-.708-.708a.5.5 0 0 0-.707 0L.646 13.940a.5.5 0 0 0 0 .707l.708.708a.5.5 0 0 0 .707 0L8.354 9.060Z"></path></svg> <span class="t" style="letter-spacing: 0.232px;">A configuração inicial do condomínio ainda não está concluída.</span></div>
<div class="a" style="left:466px;top:356px;width:170px;height:33px;border-radius:6px;background:#0dcaf0;color:#000;font-size:13px;line-height:33px;text-align:center"><span class="t" style="letter-spacing: 0.292px;">Continuar configuração</span></div>
<div class="a" style="left:1704px;top:328px;color:#000;opacity:.5"><svg viewBox="0 0 16 16" style="width:16px;height:16px;display:block"><path d="M.293.293a1 1 0 0 1 1.414 0L8 6.586 14.293.293a1 1 0 1 1 1.414 1.414L9.414 8l6.293 6.293a1 1 0 0 1-1.414 1.414L8 9.414l-6.293 6.293a1 1 0 0 1-1.414-1.414L6.586 8 .293 1.707a1 1 0 0 1 0-1.414z"></path></svg></div>

<!-- info card -->
<div class="card" style="left:449px;top:422px;width:636px;height:404px">
<div class="ch" style="width:618px;background:#04305f;color:#fff"><span class="t" style="letter-spacing: 0.163px;">Informações do Condomínio</span></div>
<div class="a" style="left:24px;top:64px"><b class="t" style="letter-spacing: 0.279px;">Morada:</b></div>
<div class="a" style="left:24px;top:88px"><span class="t" style="letter-spacing: -0.158px;">Rua das Flores, 123</span></div>
<div class="a" style="left:24px;top:112px"><span class="t" style="letter-spacing: -0.004px;">1000-001 Lisboa</span></div>
<div class="a" style="left:24px;top:152px"><b class="t" style="letter-spacing: -0.067px;">Contactos:</b></div>
<div class="a" style="left:24px;top:176px"><svg viewBox="0 0 16 16" style="width:16px;height:16px;vertical-align:-2px"><path d="M14.500 3a.5.5 0 0 1 .5.5v9a.5.5 0 0 1-.5.5h-13a.5.5 0 0 1-.5-.5v-9a.5.5 0 0 1 .5-.5h13zm-13-1A1.500 1.500 0 0 0 0 3.500v9A1.500 1.500 0 0 0 1.500 14h13a1.500 1.500 0 0 0 1.500-1.500v-9A1.500 1.500 0 0 0 14.500 2h-13z"></path><path d="M3 5.500a.5.5 0 0 1 .5-.5h9a.5.5 0 0 1 0 1h-9a.5.5 0 0 1-.5-.5zM3 8a.5.5 0 0 1 .5-.5h9a.5.5 0 0 1 0 1h-9A.5.5 0 0 1 3 8zm0 2.500a.5.5 0 0 1 .5-.5h6a.5.5 0 0 1 0 1h-6a.5.5 0 0 1-.5-.5z"></path></svg> <span class="t" style="letter-spacing: -0.06px;">NIF: 500000000</span></div>
<div class="a" style="left:24px;top:216px"><svg viewBox="0 0 16 16" style="width:16px;height:16px;vertical-align:-2px"><path d="m8 0 6.610 3h.890a.5.5 0 0 1 .5.5v2a.5.5 0 0 1-.5.5H15v7a.5.5 0 0 1 .485.380l.5 2a.498.498 0 0 1-.485.620H.5a.498.498 0 0 1-.485-.620l.5-2A.501.501 0 0 1 1 13V6H.5a.5.5 0 0 1-.5-.5v-2A.5.5 0 0 1 .5 3h.890L8 0ZM3.777 3h8.447L8 1 3.777 3ZM2 6v7h1V6H2Zm2 0v7h2.500V6H4Zm3.500 0v7h1V6h-1Zm2 0v7H12V6H9.500ZM13 6v7h1V6h-1Zm2-1V4H1v1h14Zm-.390 9H1.390l-.250 1h13.720l-.250-1Z"></path></svg> <b class="t" style="letter-spacing: 0.016px;">IBAN (Conta Principal):</b></div>
<div class="a" style="left:24px;top:241px;width:224.5px;height:24.5px;border:1px solid #e5e7eb;border-radius:4px;background:#f8f9fa;color:#3b82f6;font-family:'Liberation Mono',monospace;font-size:14px;line-height:22.5px;padding-left:6px">PT50000000000000000000001</div>
</div>

<!-- bank card -->
<div class="card" style="left:1101px;top:422px;width:636px;height:404px">
<div class="ch" style="width:618px;background:#0ea0e6;color:#1e293b"><span class="t" style="letter-spacing: -0.077px;">Contas Bancárias e Caixa</span></div>
<div class="a" style="left:24px;top:64px"><b class="t" style="letter-spacing: 0.061px;">Conta Principal</b></div>
<div class="a g" style="right:24px;top:64px"><b class="t" style="letter-spacing: 0.023px;">€9.914,97</b></div>
<div class="a muted" style="left:24px;top:93px;font-size:14px;line-height:20px"><span class="t" style="letter-spacing: -0.113px;">Banco BPI</span></div>
<div class="hr" style="left:24px;top:121px;width:586px"></div>
<div class="a" style="left:24px;top:130px"><b class="t" style="letter-spacing: -0.006px;">Poupança</b></div>
<div class="a g" style="right:24px;top:130px"><b class="t" style="letter-spacing: 0.023px;">€10.000,00</b></div>
<div class="a muted" style="left:24px;top:159px;font-size:14px;line-height:20px"><span class="t" style="letter-spacing: -0.113px;">Banco BPI</span></div>
<div class="hr" style="left:24px;top:187px;width:586px"></div>
<div class="a" style="left:24px;top:196px"><b class="t" style="letter-spacing: -0.053px;">Caixa</b></div>
<div class="a g" style="right:24px;top:196px"><b class="t" style="letter-spacing: 0.028px;">€0,00</b></div>
<div class="a muted" style="left:24px;top:225px;font-size:14px;line-height:20px"><span class="t" style="letter-spacing: -0.266px;">-</span></div>
<div class="hr" style="left:24px;top:261px;width:586px"></div>
<div class="a" style="left:24px;top:278px;font-size:17.6px;line-height:27px"><b class="t" style="letter-spacing: 0.089px; transform: translateY(1px);">Total:</b></div>
<div class="a g" style="right:24px;top:278px;font-size:17.6px;line-height:27px"><b class="t" style="letter-spacing: 0.022px; transform: translateY(1px);">€19.914,97</b></div>
<div class="a" style="left:24px;top:320px;width:586px;height:33px;border:1px solid #3b82f6;border-radius:6px;color:#3b82f6;font-size:13px;line-height:31px;text-align:center"><svg viewBox="0 0 16 16" style="width:13px;height:13px;vertical-align:-2px;margin-right:3px"><path d="m8 0 6.610 3h.890a.5.5 0 0 1 .5.5v2a.5.5 0 0 1-.5.5H15v7a.5.5 0 0 1 .485.380l.5 2a.498.498 0 0 1-.485.620H.5a.498.498 0 0 1-.485-.620l.5-2A.501.501 0 0 1 1 13V6H.5a.5.5 0 0 1-.5-.5v-2A.5.5 0 0 1 .5 3h.890L8 0ZM3.777 3h8.447L8 1 3.777 3ZM2 6v7h1V6H2Zm2 0v7h2.500V6H4Zm3.500 0v7h1V6h-1Zm2 0v7H12V6H9.500ZM13 6v7h1V6h-1Zm2-1V4H1v1h14Zm-.390 9H1.390l-.250 1h13.720l-.250-1Z"></path></svg><span class="t" style="letter-spacing: 0.095px;">Gerir Contas</span></div>
</div>

<!-- stats card -->
<div class="card" style="left:449px;top:858px;width:1288px;height:260px">
<div class="a" style="left:8px;top:8px;width:1270px;height:37px;background:#f7f7f7;border-bottom:1px solid #c4c8cc;border-radius:6px 6px 0 0;font-weight:700;font-size:16px;line-height:36px;padding-left:16px"><span class="t" style="letter-spacing: -0.018px;">Estatísticas</span></div>
<div class="sl" style="left:172.5px;top:62px"><span class="t" style="letter-spacing: -0.201px;">Frações</span></div>
<div class="sv" style="left:172.5px;top:80px"><span class="t" style="letter-spacing: 0.039px;">10</span></div>
<div class="sl" style="left:486px;top:62px"><span class="t" style="letter-spacing: 0.306px;">Condóminos</span></div>
<div class="sv" style="left:486px;top:80px"><span class="t" style="letter-spacing: 0.039px;">10</span></div>
<div class="sl" style="left:799.5px;top:62px"><span class="t" style="letter-spacing: 0.153px;">Conta à Ordem</span></div>
<div class="sv g" style="left:799.5px;top:80px"><span class="t" style="letter-spacing: -0.043px;">€9.914,97</span></div>
<div class="sl" style="left:1113px;top:62px"><span class="t" style="letter-spacing: 0.087px;">Saldo Total</span></div>
<div class="sv" style="left:1113px;top:80px;color:#0d6efd"><span class="t" style="letter-spacing: -0.036px;">€19.914,97</span></div>
<div class="sl" style="left:172.5px;top:115px"><span class="t" style="letter-spacing: 0.146px;">Quotas Pendentes</span></div>
<div class="sv" style="left:172.5px;top:133px;color:#ffc107"><span class="t" style="letter-spacing: 0.116px;">€11.753,67</span></div>
<div class="sl" style="left:486px;top:115px"><span class="t" style="letter-spacing: -0.008px;">Quotas Pagas</span></div>
<div class="sv g" style="left:486px;top:133px"><span class="t" style="letter-spacing: -0.036px;">€10.160,97</span></div>
<div class="sl" style="left:799.5px;top:115px"><span class="t" style="letter-spacing: 0.097px;">Em Atraso</span></div>
<div class="sv" style="left:799.5px;top:133px;color:#dc3545"><span class="t" style="letter-spacing: 0.039px;">69</span></div>
<div class="sv" style="left:799.5px;top:158px;color:#dc3545;font-size:17.6px;line-height:26px"><span class="t" style="letter-spacing: -0.163px; transform: translateY(1px);">(€2.674,98)</span></div>
<div class="sl" style="left:1113px;top:115px"><span class="t" style="letter-spacing: 0.139px;">Ocorrências</span></div>
<div class="sv" style="left:1113px;top:133px;color:#0dcaf0"><span class="t" style="letter-spacing: 0.047px;">4</span></div>
</div>
</div>

<div id="sb"><span class="up"></span><i></i><span class="dn"></span></div>
<div id="botshadow"></div>


</body></html>
